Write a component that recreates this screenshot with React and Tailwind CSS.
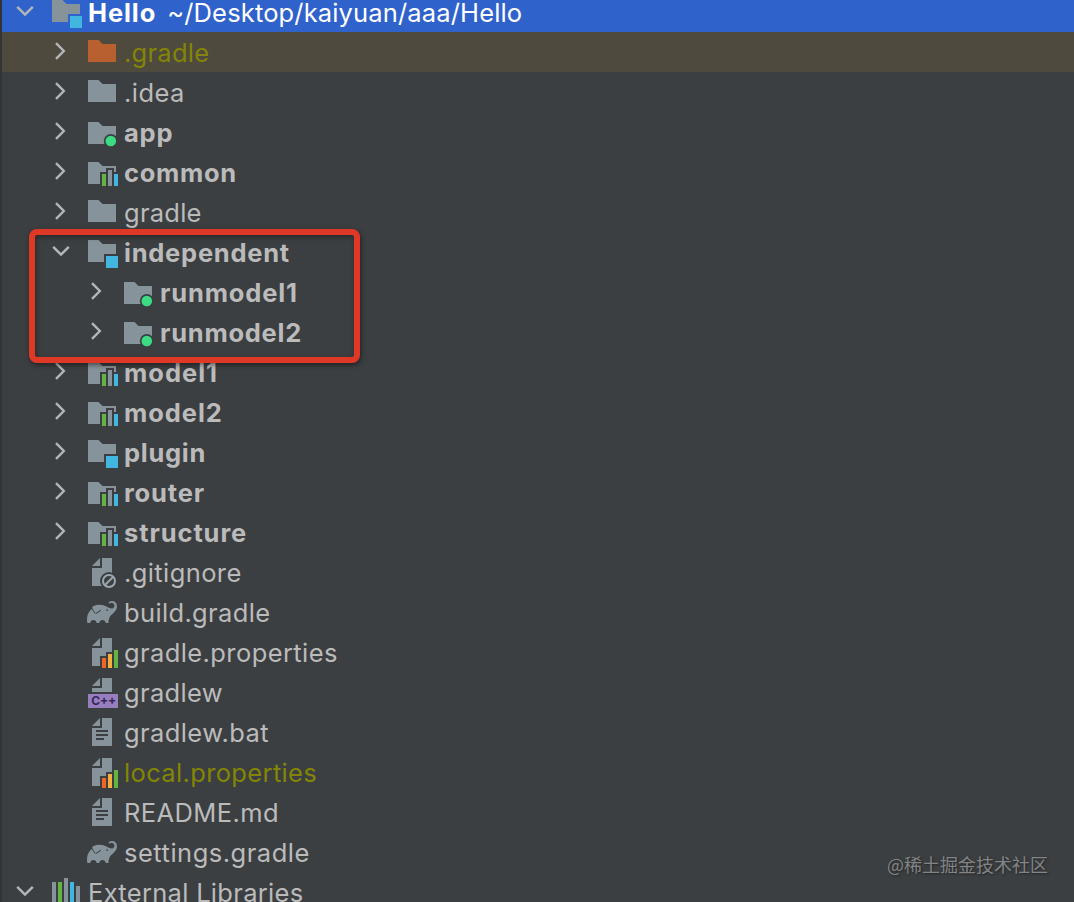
import React from "react";
import { SiGradle } from "react-icons/si";

// Base document shape shared by all file icons
const Sheet = () => (
  <path d="M14 2L6 10h8zM16 2v10H6v18h20V2z" fill="#87939A" />
);

const Svg = ({ children }) => (
  <svg className="block h-8 w-8 overflow-visible" viewBox="0 0 32 32">
    {children}
  </svg>
);

const Folder = ({ color = "#87939A" }) => (
  <Svg>
    <path d="M2 26V4h10.5l4 4H30v18z" fill={color} />
  </Svg>
);

// Folder with the blue square badge
const ModuleFolder = ({ bg = "#3C3F41" }) => (
  <Svg>
    <path d="M2 26V4h10.5l4 4H30v18z" fill="#87939A" />
    <path d="M18 18h14v14H18z" fill={bg} />
    <path d="M20 20h12v12H20z" fill="#40B6E0" />
  </Svg>
);

// Folder with the green dot badge
const AppFolder = () => (
  <Svg>
    <path d="M2 28V6h10.5l4 4H30v18z" fill="#87939A" />
    <circle cx="24.8" cy="25" r="7" fill="#3C3F41" />
    <circle cx="24.8" cy="25" r="5.3" fill="#3DDC84" />
  </Svg>
);

// Folder with library bars
const LibFolder = () => (
  <Svg>
    <path d="M2 28V6h10.5l4 4H30v18z" fill="#87939A" />
    <path d="M14 30V16h6v-4h8v4h4v14z" fill="#3C3F41" />
    <path d="M16 18h4v12h-4z" fill="#62B543" />
    <path d="M22 14h4v16h-4z" fill="#87939A" />
    <path d="M28 18h4v12h-4z" fill="#40B6E0" />
  </Svg>
);

const IgnoredFile = () => (
  <Svg>
    <Sheet />
    <circle cx="23" cy="25" r="9" fill="#3C3F41" />
    <circle cx="23" cy="25" r="6" fill="none" stroke="#9AA7B0" strokeWidth="2" />
    <path d="M19 29l8-8" stroke="#9AA7B0" strokeWidth="2" />
  </Svg>
);

const PropertiesFile = () => (
  <Svg>
    <Sheet />
    <path d="M14 32V20h6v-4h6v-4h6v20z" fill="#3C3F41" />
    <path d="M16 22h4v10h-4z" fill="#F26522" />
    <path d="M22 18h4v14h-4z" fill="#F4AF3D" />
    <path d="M28 14h4v18h-4z" fill="#62B543" />
  </Svg>
);

const CppFile = () => (
  <Svg>
    <path d="M14 2L6 10h8zM16 2v10H6v4h20V2z" fill="#87939A" />
    <path d="M2 18h30v14H2z" fill="#967EBF" />
    <text x="5.2" y="29.4" fontSize="12" fontWeight="700" fontFamily="Inter" fill="#36265A" textLength="25">
      C++
    </text>
  </Svg>
);

const TextFile = () => (
  <Svg>
    <Sheet />
    <path d="M10 14h12v2H10zM10 18h12v2H10zM10 22h8v2h-8z" fill="#3C3F41" />
  </Svg>
);

const GradleFile = () => (
  <SiGradle className="ml-px block h-[30px] w-[30px] text-[#87939A]" />
);

const Libraries = () => (
  <Svg>
    <path d="M2 6h4v24H2zM14 2h4v28h-4zM26 10h4v20h-4z" fill="#87939A" />
    <path d="M8 6h4v24H8z" fill="#62B543" />
    <path d="M20 6h4v24h-4z" fill="#40B6E0" />
  </Svg>
);

const Chevron = ({ open }) => (
  <svg className="block h-8 w-8" viewBox="0 0 32 32" fill="none" stroke="#B4B6B8" strokeWidth="2.4">
    <path d={open ? "M9.2 10.8l7.8 7.8 7.8-7.8" : "M12 7.2l7.8 7.8-7.8 7.8"} />
  </svg>
);

const rows = [
  { name: ".gradle", icon: <Folder color="#B8602F" />, arrow: true, ls: "tracking-[0.25px]", excluded: true },
  { name: ".idea", icon: <Folder />, arrow: true, ls: "tracking-[0.45px]" },
  { name: "app", icon: <AppFolder />, arrow: true, bold: true, ls: "tracking-[0.8px]" },
  { name: "common", icon: <LibFolder />, arrow: true, bold: true, ls: "tracking-[0.7px]" },
  { name: "gradle", icon: <Folder />, arrow: true, ls: "tracking-[0.25px]" },
  { name: "independent", icon: <ModuleFolder />, arrow: true, open: true, bold: true, ls: "tracking-[0.75px]" },
  { name: "runmodel1", icon: <AppFolder />, arrow: true, bold: true, nested: true, ls: "tracking-[0.85px]" },
  { name: "runmodel2", icon: <AppFolder />, arrow: true, bold: true, nested: true, ls: "tracking-[0.75px]" },
  { name: "model1", icon: <LibFolder />, arrow: true, bold: true, ls: "tracking-[1px]" },
  { name: "model2", icon: <LibFolder />, arrow: true, bold: true, ls: "tracking-[0.95px]" },
  { name: "plugin", icon: <ModuleFolder />, arrow: true, bold: true, ls: "tracking-[0.7px]" },
  { name: "router", icon: <LibFolder />, arrow: true, bold: true, ls: "tracking-[0.85px]" },
  { name: "structure", icon: <LibFolder />, arrow: true, bold: true, ls: "tracking-[0.9px]" },
  { name: ".gitignore", icon: <IgnoredFile />, ls: "tracking-[0.4px]" },
  { name: "build.gradle", icon: <GradleFile />, ls: "tracking-[0.35px]" },
  { name: "gradle.properties", icon: <PropertiesFile />, ls: "tracking-[0.4px]" },
  { name: "gradlew", icon: <CppFile />, ls: "tracking-[0.35px]" },
  { name: "gradlew.bat", icon: <TextFile />, ls: "tracking-[0.4px]" },
  { name: "local.properties", icon: <PropertiesFile />, ignored: true, ls: "tracking-[0.35px]" },
  { name: "README.md", icon: <TextFile />, ls: "tracking-[0.4px]" },
  { name: "settings.gradle", icon: <GradleFile />, ls: "tracking-[0.5px]" },
];

const Row = ({ row }) => {
  const olive = row.excluded || row.ignored;
  return (
    <div
      className={`flex h-10 shrink-0 items-center ${row.nested ? "pl-[78px]" : "pl-[42px]"} ${
        row.excluded ? "bg-[#4E4A3E]" : ""
      }`}
    >
      <div className="mr-[10px] h-8 w-8">{row.arrow && <Chevron open={row.open} />}</div>
      <div className="mr-[6px] flex h-8 w-8 items-center">{row.icon}</div>
      <span
        className={`pt-0.5 leading-10 whitespace-nowrap ${row.bold ? "font-bold" : ""} ${row.ls} ${
          olive ? "text-[#848504]" : "text-[#BBBBBB]"
        }`}
      >
        {row.name}
      </span>
    </div>
  );
};

const App = () => {
  return (
    <div className="relative flex h-[902px] w-[1074px] flex-col overflow-hidden border-l-2 border-[#323436] bg-[#3C3F41] font-['Inter',sans-serif] text-[25.5px]">
      {/* Project root */}
      <div className="-mt-2 flex h-10 shrink-0 items-center bg-[#2F62CB] pl-[6px] text-white">
        <div className="mr-[10px] h-8 w-8">
          <Chevron open />
        </div>
        <div className="mr-[6px] h-8 w-8">
          <ModuleFolder bg="#2F62CB" />
        </div>
        <span className="mr-[11px] pt-0.5 leading-10 font-bold tracking-[0.9px]">Hello</span>
        <span className="pt-0.5 leading-10 whitespace-nowrap tracking-[0.15px]">~/Desktop/kaiyuan/aaa/Hello</span>
      </div>

      {rows.map((row) => (
        <Row key={row.name} row={row} />
      ))}

      {/* External libraries */}
      <div className="flex h-10 shrink-0 items-center pl-[6px] text-[#BBBBBB]">
        <div className="mr-[10px] h-8 w-8">
          <Chevron open />
        </div>
        <div className="mr-[6px] h-8 w-8">
          <Libraries />
        </div>
        <span className="pt-0.5 leading-10 whitespace-nowrap tracking-[0.3px]">External Libraries</span>
      </div>

      {/* Highlight frame */}
      <div className="absolute top-[229px] left-[27px] h-[134px] w-[331px] rounded-lg border-6 border-[#DF3826] shadow-[1px_2px_5px_rgba(0,0,0,0.5),inset_1px_2px_5px_rgba(0,0,0,0.4)]" />

      {/* Watermark */}
      <div className="absolute right-[26px] bottom-6 font-['Noto_Sans_CJK_SC',sans-serif] text-[18px] leading-7 whitespace-nowrap text-[#828486] [text-shadow:1px_1px_2px_#222]">
        @稀土掘金技术社区
      </div>
    </div>
  );
};

export default App;
